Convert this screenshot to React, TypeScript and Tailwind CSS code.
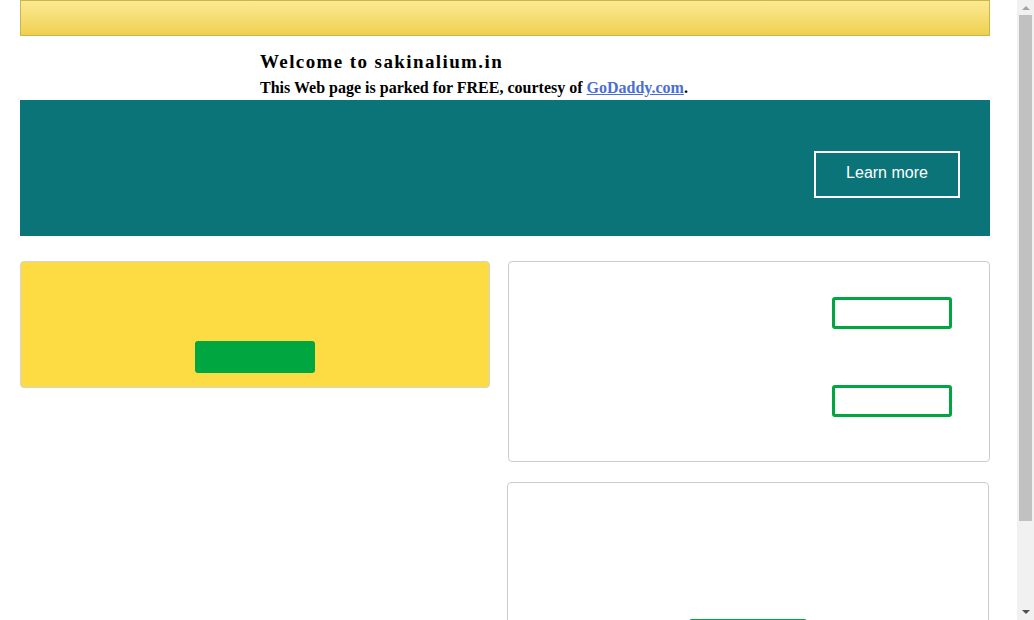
import React from "react";

export default function App() {
  return (
    <div className="flex h-[620px] w-[1034px] overflow-hidden bg-white">
      <div className="w-[1017px] h-full overflow-hidden">
        <div className="ml-[20px] w-[970px]">
          <div className="h-[36px] border border-[#cbb54c] bg-gradient-to-b from-[#fcea92] to-[#efd04d]" />
          <div className="pl-[240px] pt-[14px] pb-[2px]" style={{ fontFamily: '"Liberation Serif", "Times New Roman", serif' }}>
            <h1 className="text-[19px] leading-[24px] font-bold tracking-[1.4px] text-black">Welcome to sakinalium.in</h1>
            <p className="mt-[4px] text-[16px] leading-[20px] font-bold text-black">
              This Web page is parked for FREE, courtesy of{" "}
              <a className="text-[#4a6ed4] underline" href="#">GoDaddy.com</a>.
            </p>
          </div>
          <div className="h-[136px] bg-[#0a7478] flex items-start justify-end pt-[51px] pr-[30px]">
            <div
              className="w-[146px] h-[47px] border-2 border-white flex items-center justify-center pb-[4px] text-white text-[16px]"
              style={{ fontFamily: '"Liberation Sans", Arial, sans-serif' }}
            >
              Learn more
            </div>
          </div>
          <div className="mt-[25px] flex gap-[18px] items-start">
            <div className="w-[470px] h-[127px] bg-[#fddb43] border border-[#d4d4d4] rounded-[4px] flex justify-center pt-[79px]">
              <div className="w-[120px] h-[32px] bg-[#00a63f] rounded-[3px]" />
            </div>
            <div className="w-[482px] flex flex-col gap-[20px]">
              <div className="h-[201px] border border-[#cccccc] rounded-[4px] bg-white flex flex-col items-end pt-[35px] pr-[37px] gap-[56px]">
                <div className="w-[120px] h-[32px] border-[3px] border-[#00a63f] rounded-[3px]" />
                <div className="w-[120px] h-[32px] border-[3px] border-[#00a63f] rounded-[3px]" />
              </div>
              <div className="ml-[-1px] mr-[1px] h-[200px] border border-[#cccccc] rounded-[4px] bg-white pt-[136px] pl-[181px]">
                <div className="w-[118px] h-[32px] border-[2px] border-[#00a63f] rounded-[3px]" />
              </div>
            </div>
          </div>
        </div>
      </div>
      <div className="w-[17px] h-full bg-[#f1f1f1] flex flex-col items-center">
        <div className="h-[15px] flex items-center justify-center">
          <div className="w-0 h-0 border-l-[4px] border-r-[4px] border-b-[4px] border-l-transparent border-r-transparent border-b-[#a3a3a3]" />
        </div>
        <div className="w-[13px] h-[506px] bg-[#c1c1c1]" />
        <div className="flex-1" />
        <div className="h-[17px] flex items-center justify-center">
          <div className="w-0 h-0 border-l-[4px] border-r-[4px] border-t-[4px] border-l-transparent border-r-transparent border-t-[#505050]" />
        </div>
      </div>
    </div>
  );
}
